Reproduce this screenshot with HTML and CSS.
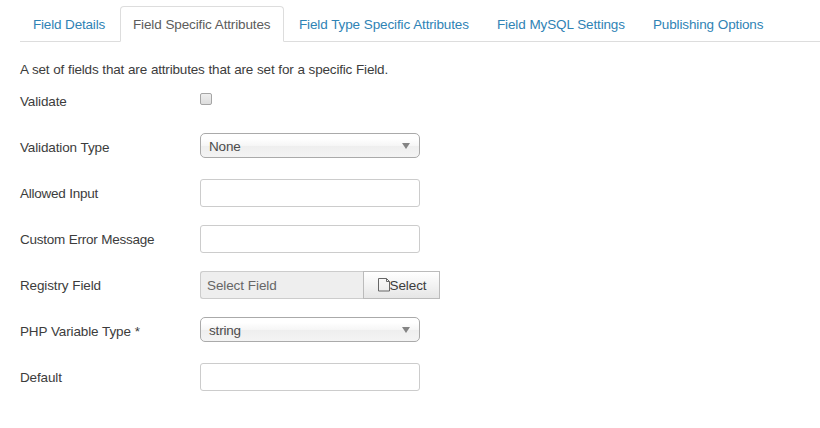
FILE: index.html
```html
<!DOCTYPE html>
<html lang="en">
<head>
<meta charset="utf-8">
<title>Field Specific Attributes</title>
<link rel="stylesheet" href="styles.css">
</head>
<body>
<nav class="tabs">
  <a class="tab">Field Details</a>
  <a class="tab active">Field Specific Attributes</a>
  <a class="tab">Field Type Specific Attributes</a>
  <a class="tab">Field MySQL Settings</a>
  <a class="tab">Publishing Options</a>
</nav>
<main>
  <p class="intro">A set of fields that are attributes that are set for a specific Field.</p>
  <div class="row check-row"><label>Validate</label><span class="checkbox"></span></div>
  <div class="row"><label>Validation Type</label><div class="select"><span>None</span><i class="arrow"></i></div></div>
  <div class="row"><label class="tight">Allowed Input</label><div class="input"></div></div>
  <div class="row"><label class="tight">Custom Error Message</label><div class="input"></div></div>
  <div class="row"><label>Registry Field</label><div class="picker"><span class="value">Select Field</span><span class="button"><svg class="file" viewBox="0 0 12 14"><path d="M.5 .5h8l3 3v9.500h-11zM8.500 .5v3h3"/></svg>Select</span></div></div>
  <div class="row"><label>PHP Variable Type *</label><div class="select"><span>string</span><i class="arrow"></i></div></div>
  <div class="row"><label>Default</label><div class="input"></div></div>
</main>
</body>
</html>
```

FILE: styles.css
```css
* { box-sizing: border-box; }
body { margin: 0; background: #fff; color: #3c3c3c; font: 13.5px/18px "Liberation Sans", Arial, sans-serif; letter-spacing: -.18px; word-spacing: .3px; }
.tabs { display: grid; grid-template-columns: 98px 164px 196px 154px 136px; column-gap: 2px; height: 42px; padding-top: 6px; margin-left: 20px; border-bottom: 1px solid #ddd; letter-spacing: -.14px; }
.tab { height: 36px; padding: 9px 0 0 12px; border: 1px solid transparent; border-radius: 4px 4px 0 0; color: #2f83b5; white-space: nowrap; }
.tab:first-child { letter-spacing: -.2px; }
.tab.active { border-color: #ddd #ddd #fff; background: #fff; color: #5c5c5c; }
main { padding: 19px 20px 0; }
.intro { margin: 0 0 10px; height: 18px; }
.row { display: flex; height: 46px; align-items: flex-start; }
label { width: 180px; padding-top: 6px; letter-spacing: -.14px; }
.tight { letter-spacing: -.26px; }
.check-row { height: 44px; }
.check-row label { padding-top: 4px; }
.checkbox { width: 12px; height: 12px; margin-top: 4px; border: 1px solid #a5a5a5; border-radius: 2px; background: linear-gradient(#eee, #ddd); }
.input { width: 220px; height: 28px; border: 1px solid #ccc; border-radius: 3px; background: #fff; }
.select { display: flex; width: 220px; height: 25px; padding: 2px 9px 0 8px; align-items: center; justify-content: space-between; border: 1px solid #aaa; border-radius: 5px; background: linear-gradient(#fff 20%, #f6f6f6 50%, #eee 52%, #f4f4f4); color: #4c4c4c; }
.arrow { margin-bottom: 2px; border: 4px solid transparent; border-top: 6px solid #848484; border-bottom: 0; }
.picker { display: flex; width: 240px; height: 28px; }
.value { width: 163px; padding: 5px 6px; border: 1px solid #ccc; border-right: 0; border-radius: 3px 0 0 3px; background: #eee; color: #666; letter-spacing: -.1px; }
.button { display: flex; width: 77px; padding: 1px 0 0 1px; align-items: center; justify-content: center; border: 1px solid #bbb; background: linear-gradient(#fff, #e6e6e6); letter-spacing: -.1px; }
.file { width: 12px; height: 14px; margin-bottom: 1px; fill: none; stroke: #666; }
```
